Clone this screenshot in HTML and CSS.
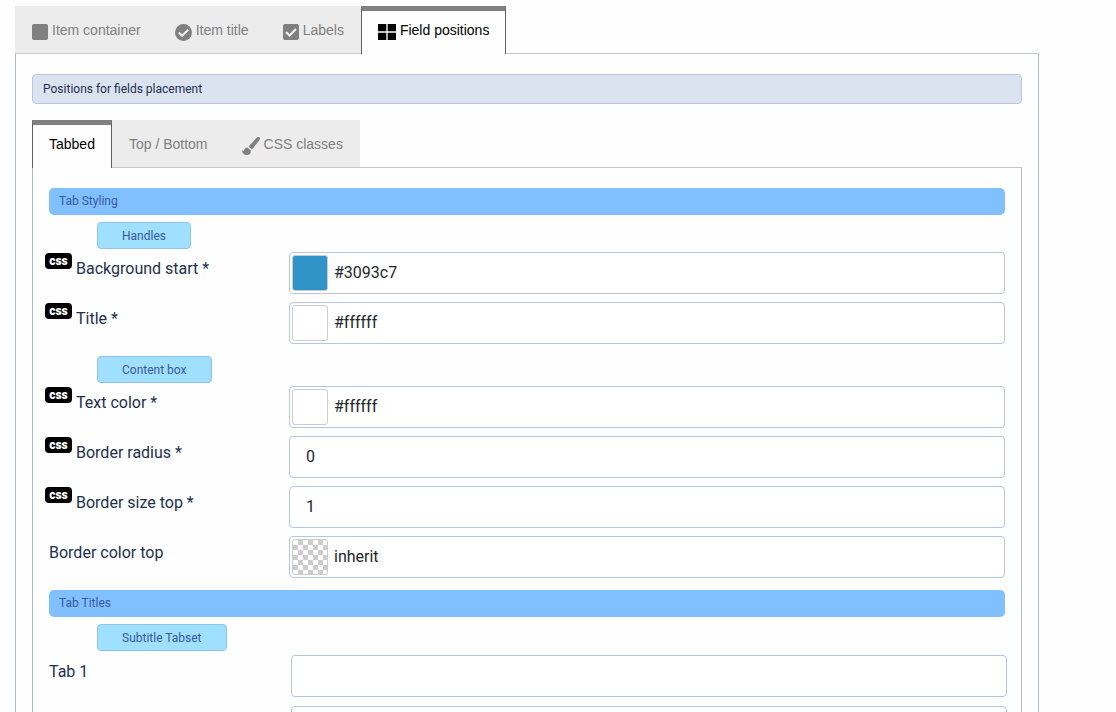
FILE: index.html
```
<!DOCTYPE html>
<html lang="en">
<head>
    <meta charset="UTF-8">
    <title>Field positions</title>
    <link rel="stylesheet" href="styles.css">
</head>
<body>
<div class="page">
    <div class="tabs" role="tablist">
        <button type="button" class="tab" role="tab">
            <svg class="icon" width="16" height="16" viewBox="0 0 16 16"><rect width="16" height="16" rx="2"/></svg>
            <span>Item container</span>
        </button>
        <button type="button" class="tab" role="tab">
            <svg class="icon" width="17" height="17" viewBox="0 0 18 18"><circle cx="9" cy="9" r="9"/><path class="tick" d="M4 9l3.500 3.500L14 6"/></svg>
            <span>Item title</span>
        </button>
        <button type="button" class="tab" role="tab">
            <svg class="icon" width="16" height="16" viewBox="0 0 16 16"><rect width="16" height="16" rx="2"/><path class="tick" d="M3 8l3.500 3.500L13 5"/></svg>
            <span>Labels</span>
        </button>
        <button type="button" class="tab current" role="tab" aria-selected="true">
            <svg class="icon" width="18" height="16" viewBox="0 0 18 16"><path d="M0 0h8.300v7.300H0zM9.700 0H18v7.300H9.700zM0 8.700h8.300V16H0zM9.700 8.700H18V16H9.700z"/></svg>
            <span>Field positions</span>
        </button>
    </div>
    <div class="panel">
        <div class="info">Positions for fields placement</div>
        <div class="tabs" role="tablist">
            <button type="button" class="tab current" role="tab" aria-selected="true"><span>Tabbed</span></button>
            <button type="button" class="tab" role="tab"><span>Top / Bottom</span></button>
            <button type="button" class="tab" role="tab">
                <svg class="icon" width="18" height="18" viewBox="0 0 18 18"><path d="M16.500 0c-1 0-1.700.6-2.300 1.200L7.500 8.500c-.4.5-.6.9-.7 1.300l2.800 2.500c.6-.2 1-.4 1.400-.9C13.500 8 18 3 18 1.500 18 .6 17.300 0 16.500 0zM5.400 10.600c-2.300 0-2.700 1.900-3.300 3.100-.4.700-1.100.1-2.100-.4C.2 16.200 1.800 18 4.800 18c2.700 0 4.200-1.700 4.100-4.300z"/></svg>
                <span>CSS classes</span>
            </button>
        </div>
        <div class="panel">
            <div class="section">Tab Styling</div>
            <div class="subtitle">Handles</div>
            <div class="group">
                <div class="row">
                    <label for="bg_start"><span class="badge">css</span>Background start *</label>
                    <div class="field">
                        <button type="button" class="swatch" style="background-color: #3093c7" aria-label="Background start"></button>
                        <input type="text" id="bg_start" value="#3093c7">
                    </div>
                </div>
                <div class="row">
                    <label for="title_color"><span class="badge">css</span>Title *</label>
                    <div class="field">
                        <button type="button" class="swatch" style="background-color: #ffffff" aria-label="Title"></button>
                        <input type="text" id="title_color" value="#ffffff">
                    </div>
                </div>
            </div>
            <div class="subtitle">Content box</div>
            <div class="group">
                <div class="row">
                    <label for="text_color"><span class="badge">css</span>Text color *</label>
                    <div class="field">
                        <button type="button" class="swatch" style="background-color: #ffffff" aria-label="Text color"></button>
                        <input type="text" id="text_color" value="#ffffff">
                    </div>
                </div>
                <div class="row">
                    <label for="radius"><span class="badge">css</span>Border radius *</label>
                    <div class="field plain"><input type="text" id="radius" value="0"></div>
                </div>
                <div class="row">
                    <label for="size_top"><span class="badge">css</span>Border size top *</label>
                    <div class="field plain"><input type="text" id="size_top" value="1"></div>
                </div>
                <div class="row">
                    <label for="color_top">Border color top</label>
                    <div class="field">
                        <button type="button" class="swatch checker" aria-label="Border color top"></button>
                        <input type="text" id="color_top" value="inherit">
                    </div>
                </div>
            </div>
            <div class="section">Tab Titles</div>
            <div class="subtitle">Subtitle Tabset</div>
            <div class="group titles">
                <div class="row">
                    <label for="tab1">Tab 1</label>
                    <div class="field plain"><input type="text" id="tab1"></div>
                </div>
                <div class="row">
                    <label for="tab2">Tab 2</label>
                    <div class="field plain"><input type="text" id="tab2"></div>
                </div>
            </div>
        </div>
    </div>
</div>
</body>
</html>
```
FILE: styles.css
```
* {
    margin: 0;
    padding: 0;
    box-sizing: border-box;
}
html, body {
    height: 100%;
}
body {
    overflow: hidden;
    background-color: #fefefe;
    font-family: Roboto, sans-serif;
    font-size: 16px;
    color: #22304f;
}
.page {
    padding: 6px 77px 0 15px;
}

/* tabs */
.tabs {
    display: flex;
    margin-bottom: -1px;
}
.tab {
    display: flex;
    gap: 4px;
    align-items: center;
    margin-bottom: 1px;
    padding: 14px 17px 13px;
    border: 0;
    background-color: #ececec;
    color: #808080;
    font: 14px/20px "Liberation Sans", Arial, sans-serif;
    cursor: pointer;
}
.tab.current {
    position: relative;
    margin-bottom: 0;
    padding: 9px 16px 14px;
    border: solid #606060;
    border-width: 5px 1px 0;
    border-top-color: #808080;
    background-color: #fefefe;
    color: #000;
}
.icon {
    margin: 3px 0 -1px;
    fill: currentColor;
}
.tick {
    fill: none;
    stroke: #ececec;
    stroke-width: 2.2;
}
.panel {
    padding: 20px 16px;
    border: 1px solid #b0bccb;
    border-top-color: #c4c8cb;
}

.info {
    margin-bottom: 16px;
    padding: 4px 10px;
    border: 1px solid #b4c6e2;
    border-radius: 4px;
    background-color: #dce3f0;
    font-size: 12px;
    line-height: 20px;
}
.section {
    margin-bottom: 7px;
    padding: 3px 10px 4px;
    border-radius: 5px;
    background-color: #80c0ff;
    color: #3858a8;
    font-size: 12px;
    line-height: 20px;
}
.subtitle {
    width: fit-content;
    margin: 0 0 3px 48px;
    padding: 3px 24px 2px;
    border: 1px solid #90c4f0;
    border-radius: 4px;
    background-color: #a0e0ff;
    color: #3858a0;
    font-size: 12px;
    line-height: 20px;
}

/* form rows */
.group {
    display: flex;
    flex-direction: column;
    gap: 8px;
    margin-bottom: 12px;
}
.row {
    display: grid;
    grid-template-columns: 240px 1fr;
}
.row label {
    display: flex;
    gap: 4px;
    padding-top: 5px;
    line-height: 24px;
}
.badge {
    width: 27px;
    height: 16px;
    margin: -4px 0 0 -4px;
    border-radius: 4px;
    background-color: #000;
    color: #fff;
    font-size: 12px;
    font-weight: 900;
    line-height: 16px;
    text-align: center;
}
.field {
    display: flex;
    gap: 6px;
    height: 42px;
    padding: 2px;
    border: 1px solid #b4c6e2;
    border-radius: 4px;
    background-color: #fff;
}
.field input {
    flex: 1;
    min-width: 0;
    padding-bottom: 2px;
    border: 0;
    outline: 0;
    background: none;
    color: #22262a;
    font: inherit;
}
.field.plain {
    padding: 2px 16px;
}
.swatch {
    width: 36px;
    height: 36px;
    border: 1px solid #ccc;
    border-radius: 3px;
    cursor: pointer;
}
.checker {
    background: repeating-conic-gradient(#ccc 0 25%, #fff 0 50%) 0 0 / 10px 10px;
}
.titles {
    gap: 9px;
    padding-top: 1px;
}
.titles .field {
    margin: 0 -2px 0 2px;
}
```
